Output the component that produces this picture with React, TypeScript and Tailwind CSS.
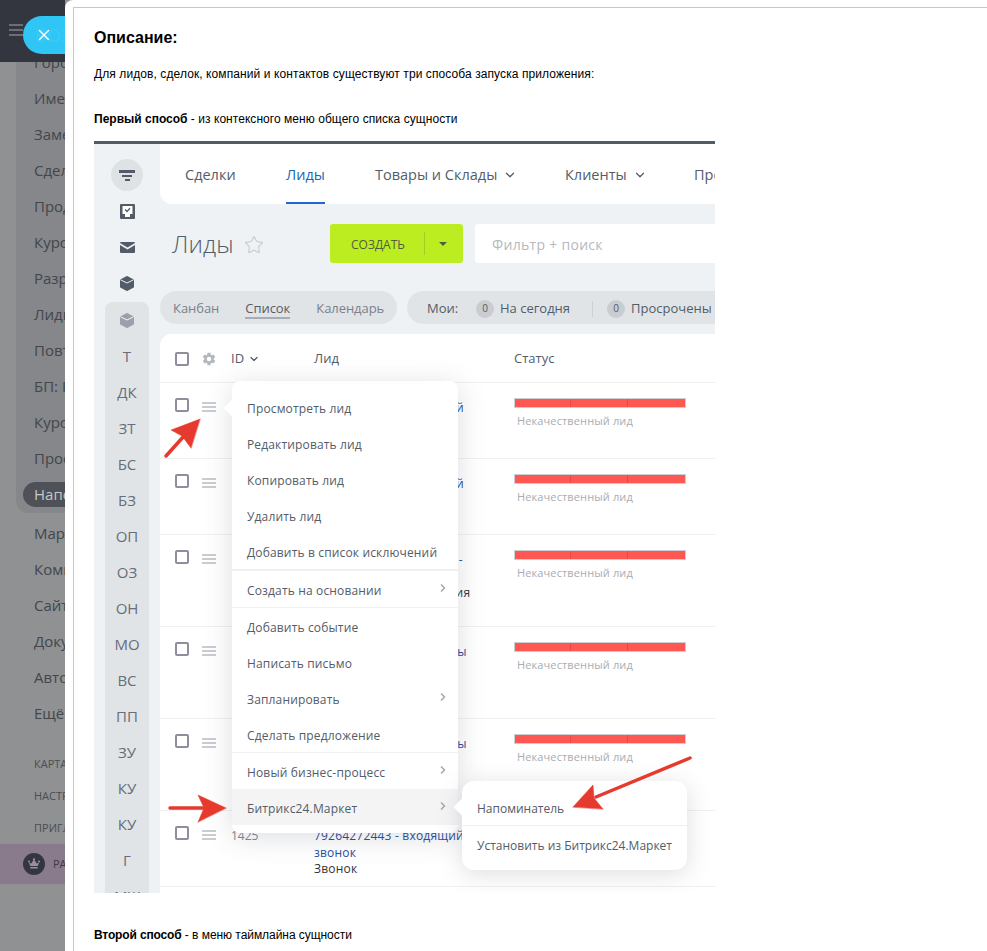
import { ChevronDown, ChevronRight, Star, X } from "lucide-react";
import { IoSettingsSharp } from "react-icons/io5";

const groupItems = ["Города", "Имена", "Замена", "Сделки", "Продажи", "Курсы", "Разработка", "Лиды", "Повторные", "БП: Работа", "Курсы", "Проекты"];
const sideItems = ["Маркет", "Компания", "Сайты", "Документы", "Автоматизация", "Ещё"];
const smallItems = ["Карта сайта", "Настройки", "Пригласить"];
const letters = ["Т", "ДК", "ЗТ", "БС", "БЗ", "ОП", "ОЗ", "ОН", "МО", "ВС", "ПП", "ЗУ", "КУ", "КУ", "Г", "МЖ"];

const rows = [
  { id: "1431", h: "h-[76px]", title: ["79264272443 - входящий", "звонок"], sub: "Звонок", status: true },
  { id: "1430", h: "h-[76px]", title: ["79264272443 - входящий", "звонок"], sub: "Звонок", status: true },
  { id: "1429", h: "h-[92px]", title: ["Заявка на звонок сайта -", "Новая заявка"], sub: "Заявка сайта: инвестиция", status: true },
  { id: "1428", h: "h-[92px]", title: ["Входящий заказ с формы", ""], sub: "Заказ", status: true },
  { id: "1427", h: "h-[92px]", title: ["Входящий заказ с формы", ""], sub: "Заказ", status: true },
  { id: "1425", h: "h-[76px]", title: ["79264272443 - входящий", "звонок"], sub: "Звонок", status: false },
];

const menuGroups = [
  { items: [["Просмотреть лид"], ["Редактировать лид"], ["Копировать лид"], ["Удалить лид"], ["Добавить в список исключений"]], divider: "border-b-2 border-[#eef0f1]" },
  { items: [["Создать на основании", ">"]], divider: "border-b border-[#eef0f1]" },
  { items: [["Добавить событие"], ["Написать письмо"], ["Запланировать", ">"], ["Сделать предложение"]], divider: "border-b border-[#eef0f1]" },
];

function Hamburger() {
  return (
    <div className="flex w-[14px] flex-col gap-[2px]">
      <div className="h-[2px] bg-[#c9ccd0]" />
      <div className="h-[2px] bg-[#c9ccd0]" />
      <div className="h-[2px] bg-[#c9ccd0]" />
    </div>
  );
}

function Checkbox() {
  return <div className="h-[14px] w-[14px] rounded-[2px] border-2 border-[#8e8e9e] bg-white" />;
}

function MenuItem({ label, more, active }: { label: string; more?: boolean; active?: boolean }) {
  return (
    <div className={`flex h-[36px] items-center justify-between pl-[15px] pr-[9px] pt-[4px] text-[12px] tracking-[0.15px] text-[#535c69] ${active ? "bg-[#f4f4f5]" : ""}`}>
      <span className="whitespace-nowrap">{label}</span>
      {more && <ChevronRight className="mb-[6px] h-[12px] w-[12px] text-[#a8adb4]" strokeWidth={3.5} />}
    </div>
  );
}

function StatusBar() {
  return (
    <div className="pt-[1px]">
      <div className="flex h-[10px] w-[172px] border border-[#ccd0d4] bg-[#ff5752]">
        <div className="w-[56px] border-r border-[#e04c4a]" />
        <div className="w-[57px] border-r border-[#e04c4a]" />
      </div>
      <div className="ml-[3px] mt-[5px] text-[11px] leading-[16px] tracking-[0.12px] text-[#a8adb4]">Некачественный лид</div>
    </div>
  );
}

function CubeIcon({ color }: { color: string }) {
  return (
    <svg width="14" height="15" viewBox="0 0 14 15">
      <path d="M6.3.3a1.5 1.5 0 0 1 1.4 0l5.6 2.9a1 1 0 0 1 .7 1v6.6a1 1 0 0 1-.7 1l-5.6 2.9a1.5 1.5 0 0 1-1.4 0L.7 11.8a1 1 0 0 1-.7-1V4.2a1 1 0 0 1 .7-1z" fill={color} />
      <path d="M.5 3.8L7 7l6.5-3.2" fill="none" stroke="#fff" strokeWidth="0.9" />
    </svg>
  );
}

export default function App() {
  return (
    <div className="relative flex h-[951px] w-[987px] overflow-hidden bg-[#8f9193] font-['Open_Sans',sans-serif]">
      {/* dimmed portal sidebar */}
      <div className="w-[65px] shrink-0 overflow-hidden">
        <div className="relative z-10 flex h-[62px] items-center bg-[#33363f] pb-[2px] pl-[9px]">
          <div className="flex w-[14px] flex-col gap-[3px]">
            <div className="h-[2px] bg-[#6b6e75]" />
            <div className="h-[2px] bg-[#6b6e75]" />
            <div className="h-[2px] bg-[#6b6e75]" />
          </div>
        </div>
        <div className="-mt-[18px] ml-[16px] w-[120px] rounded-bl-xl bg-[#85878a] pb-[1px] pl-[18px] text-[15px] text-[#43464c]">
          {groupItems.map((item, i) => (
            <div key={i} className="flex h-[36px] items-center whitespace-nowrap">{item}</div>
          ))}
          <div className="-ml-[11px] flex h-[36px] items-center">
            <div className="flex h-[25px] w-full items-center rounded-full bg-[#4e5158] pl-[11px] text-[#c6c7c9]">Напоминатель</div>
          </div>
        </div>
        <div className="mt-[2px] w-[200px] pl-[34px] text-[15px] text-[#43464c]">
          {sideItems.map((item) => (
            <div key={item} className="flex h-[36px] items-center whitespace-nowrap">{item}</div>
          ))}
        </div>
        <div className="mt-[17px] w-[200px] pl-[34px] text-[11px] uppercase text-[#4b4d52]">
          {smallItems.map((item) => (
            <div key={item} className="flex h-[32px] items-center whitespace-nowrap">{item}</div>
          ))}
        </div>
        <div className="flex h-[40px] w-[200px] items-center bg-[#897a8c] pl-[23px] text-[11px] uppercase text-[#3a3c42]">
          <div className="flex h-[22px] w-[22px] items-center justify-center rounded-full bg-[#33363f]">
            <svg width="14" height="12" viewBox="0 0 14 12">
              <path d="M1 3.5a1 1 0 1 1 .9 1L3.2 8h7.6l1.3-3.5a1 1 0 1 1 .9-1 1 1 0 0 1-.6.9L9.7 5.6 7.5 2a1 1 0 1 0-1 0L4.3 5.6 1.6 4.4A1 1 0 0 1 1 3.5zM3.3 9h7.4v1.5H3.3z" fill="#9a8ea0" />
            </svg>
          </div>
          <span className="ml-[8px] whitespace-nowrap">Расширить</span>
        </div>
      </div>

      {/* slider content */}
      <div className="relative z-20 flex-1 rounded-tl-lg bg-white pl-[8px] pt-[7px]">
        <div className="h-full border-l border-t border-[#c6c6c6] pl-[20px] font-['Liberation_Sans',sans-serif] text-black">
          <h1 className="mt-[20px] text-[16px] font-bold leading-[20px]">Описание:</h1>
          <p className="mt-[18px] text-[12px] leading-[16px] tracking-[0.09px]">Для лидов, сделок, компаний и контактов существуют три способа запуска приложения:</p>
          <p className="mt-[29px] text-[12px] leading-[16px]"><b>Первый способ</b> <span className="tracking-[0.05px]">- из контексного меню общего списка сущности</span></p>

          {/* first screenshot */}
          <div className="relative mt-[14px] flex h-[752px] w-[621px] overflow-hidden border-t-[3px] border-[#525c69] bg-[#eef2f4] font-['Open_Sans',sans-serif]">
            <div className="flex w-[66px] shrink-0 flex-col items-center pt-[15px]">
              <div className="flex h-[32px] w-[32px] shrink-0 flex-col items-center justify-center gap-[2px] rounded-full bg-[#dfe2e5]">
                <div className="h-[3px] w-[16px] bg-[#525c69]" />
                <div className="h-[2px] w-[10px] bg-[#525c69]" />
                <div className="h-[2px] w-[5px] bg-[#525c69]" />
              </div>
              <div className="mt-[2px] flex h-[36px] shrink-0 items-center">
                <svg width="15" height="15" viewBox="0 0 15 15">
                  <path d="M1 0h13a1 1 0 0 1 1 1v13a1 1 0 0 1-1 1H1a1 1 0 0 1-1-1V1a1 1 0 0 1 1-1z" fill="#525c69" />
                  <path d="M2.5 2h10v8H10v3H5v-3H2.5z" fill="#fff" />
                  <path d="M5 5.5l2 2 3-3.2" fill="none" stroke="#525c69" strokeWidth="1.3" />
                </svg>
              </div>
              <div className="flex h-[36px] shrink-0 items-center">
                <svg width="15" height="11" viewBox="0 0 15 11">
                  <path d="M0 1a1 1 0 0 1 1-1h13a1 1 0 0 1 1 1L7.5 5.5zM0 3l7.5 4.5L15 3v7a1 1 0 0 1-1 1H1a1 1 0 0 1-1-1z" fill="#525c69" />
                </svg>
              </div>
              <div className="flex h-[36px] shrink-0 items-center">
                <CubeIcon color="#525c69" />
              </div>
              <div className="mt-px flex w-[44px] shrink-0 flex-col items-center rounded-t-lg bg-[#e1e4e7] text-[15px] text-[#656e7a]">
                <div className="flex h-[36px] shrink-0 items-center">
                  <CubeIcon color="#9aa1ab" />
                </div>
                {letters.map((letter, i) => (
                  <div key={i} className="flex h-[36px] shrink-0 items-center">{letter}</div>
                ))}
              </div>
            </div>

            <div className="flex w-[555px] shrink-0 flex-col">
              <div className="flex h-[60px] shrink-0 items-center overflow-hidden rounded-bl-xl bg-white pl-[25px] text-[14.5px] text-[#535c69]">
                <span className="w-[101px] shrink-0 pt-[2px]">Сделки</span>
                <span className="relative flex h-full w-[89px] shrink-0 items-center pt-[2px] text-[#2067b0]">
                  Лиды
                  <span className="absolute bottom-0 left-0 h-[2px] w-[39px] bg-[#1f67d0]" />
                </span>
                <span className="flex w-[190px] shrink-0 items-center gap-[6px] pt-[2px]">Товары и Склады <ChevronDown className="h-[14px] w-[14px]" strokeWidth={2.2} /></span>
                <span className="flex w-[129px] shrink-0 items-center gap-[6px] pt-[2px]">Клиенты <ChevronDown className="h-[14px] w-[14px]" strokeWidth={2.2} /></span>
                <span className="shrink-0 pt-[2px]">Продажи</span>
              </div>

              <div className="mt-[20px] flex h-[39px] shrink-0">
                <div className="flex w-[170px] items-center pl-[12px]">
                  <span className="text-[24px] font-light leading-none tracking-[0.1px] text-[#535c69]">Лиды</span>
                  <Star className="ml-[10px] mt-[2px] h-[20px] w-[20px] text-[#c6cace]" strokeWidth={1.3} />
                </div>
                <div className="flex w-[133px] items-center rounded-[3px] bg-[#bbed21] pl-[21px] pt-[3px] text-[12px] text-[#535c41]">
                  <span className="w-[73px]">СОЗДАТЬ</span>
                  <div className="-mt-[3px] h-[23px] w-px bg-[#a3cf1e]" />
                  <div className="-mt-[3px] ml-[14px] h-0 w-0 border-x-[4px] border-t-[4px] border-x-transparent border-t-[#535c41]" />
                </div>
                <div className="ml-[12px] flex flex-1 items-center rounded-l-[3px] bg-white pl-[17px] pt-[1px] text-[14px] tracking-[0.3px] text-[#b4b9bf]">Фильтр + поиск</div>
              </div>

              <div className="mt-[28px] flex h-[33px] shrink-0 gap-[10px] text-[13px] text-[#7a818b]">
                <div className="flex w-[237px] items-center gap-[26px] rounded-full bg-[#e1e4e7] pl-[13px] pt-[2px] tracking-[-0.05px]">
                  <span>Канбан</span>
                  <span className="border-b-2 border-[#a8adb4] leading-[18px] text-[#535c69]">Список</span>
                  <span>Календарь</span>
                </div>
                <div className="flex flex-1 items-center rounded-l-full bg-[#e1e4e7] pl-[20px] pt-[2px] text-[#535c69]">
                  <span className="w-[49px]">Мои:</span>
                  <span className="flex h-[18px] w-[18px] items-center justify-center rounded-full bg-[#c9ccd0] text-[10px]">0</span>
                  <span className="ml-[6px] w-[92px] whitespace-nowrap">На сегодня</span>
                  <div className="h-[16px] w-px bg-[#cdd0d4]" />
                  <span className="ml-[14px] flex h-[18px] w-[18px] items-center justify-center rounded-full bg-[#c9ccd0] text-[10px]">0</span>
                  <span className="ml-[6px] whitespace-nowrap">Просрочены</span>
                </div>
              </div>

              <div className="mt-[10px] flex-1 rounded-tl-xl bg-white text-[12px]">
                <div className="flex h-[49px] items-center border-b border-[#eef0f1] pl-[15px] pt-[2px] text-[#535c69]">
                  <Checkbox />
                  <IoSettingsSharp className="ml-[13px] h-[14px] w-[14px] text-[#b4b8bd]" />
                  <span className="ml-[15px] flex w-[83px] items-center gap-[4px] text-[13px]">ID <ChevronDown className="h-[12px] w-[12px]" strokeWidth={2.5} /></span>
                  <span className="w-[200px] text-[13px]">Лид</span>
                  <span className="text-[13px]">Статус</span>
                </div>
                {rows.map((row) => (
                  <div key={row.id} className={`flex ${row.h} border-b border-[#eef0f1] pl-[15px] pt-[14px]`}>
                    <div className="pt-[1px]"><Checkbox /></div>
                    <div className="ml-[13px] pt-[5px]"><Hamburger /></div>
                    <div className="ml-[15px] w-[83px] pt-[2px] text-[#80868e]">{row.id}</div>
                    <div className="w-[200px] whitespace-nowrap pt-[2px] leading-[17px] tracking-[0.2px]">
                      <div className="text-[#1f4e9f]">{row.title[0]}</div>
                      <div className="h-[17px] text-[#1f4e9f]">{row.title[1]}</div>
                      <div className="-mt-px text-[#333]">{row.sub}</div>
                    </div>
                    {row.status && <StatusBar />}
                  </div>
                ))}
              </div>
            </div>

            {/* context menu */}
            <div className="absolute left-[138px] top-[237px] z-10 w-[226px] rounded-lg bg-white pb-[8px] pt-[8px] shadow-[0_4px_28px_rgba(83,92,105,0.2)]">
              <div className="absolute -left-[6px] top-[21px] h-[12px] w-[12px] rotate-45 bg-white" />
              {menuGroups.map((group, i) => (
                <div key={i} className={group.divider}>
                  {group.items.map(([label, more]) => (
                    <MenuItem key={label} label={label} more={!!more} />
                  ))}
                </div>
              ))}
              <MenuItem label="Новый бизнес-процесс" more />
              <MenuItem label="Битрикс24.Маркет" more active />
            </div>

            {/* submenu */}
            <div className="absolute left-[368px] top-[637px] z-20 w-[225px] rounded-xl bg-white text-[12px] leading-[18px] text-[#535c69] shadow-[0_4px_24px_rgba(83,92,105,0.2)]">
              <div className="absolute -left-[6px] top-[20px] h-[12px] w-[12px] rotate-45 bg-white" />
              <div className="relative border-b border-[#eef0f1] pb-[7px] pl-[15px] pt-[19px]">Напоминатель</div>
              <div className="relative whitespace-nowrap pb-[15px] pl-[15px] pt-[11px]">Установить из Битрикс24.Маркет</div>
            </div>
          </div>

          <p className="mt-[34px] text-[12px] leading-[16px]"><b className="tracking-[-0.15px]">Второй способ</b> <span className="tracking-[-0.05px]">- в меню таймлайна сущности</span></p>
        </div>
      </div>

      {/* close button of the slider */}
      <div className="absolute left-[23px] top-[16px] z-30 flex h-[38px] w-[42px] items-center justify-center overflow-hidden rounded-l-full bg-[#2fc6f6] pr-[1px]">
        <span className="absolute left-[12px] top-[7px] whitespace-nowrap text-[18px] leading-[24px] text-[#38cbf8]">ВОЗ</span>
        <X className="relative h-[18px] w-[18px] text-white" strokeWidth={2} />
      </div>

      {/* red annotation arrows */}
      <svg className="pointer-events-none absolute left-0 top-0 z-40" width="987" height="951" viewBox="0 0 987 951">
        <g fill="#e63a2e" stroke="#e63a2e" strokeLinecap="round">
          <path d="M166 456L184 436" strokeWidth="3.5" />
          <path d="M200 419L171 430L182 436L191 448Z" strokeWidth="0.5" />
          <path d="M170 808L206 808" strokeWidth="3.5" />
          <path d="M226 808L198 795L204 808L198 822Z" strokeWidth="0.5" />
          <path d="M690 758L596 797" strokeWidth="3.5" />
          <path d="M573 807L593 785L594 798L603 809Z" strokeWidth="0.5" />
        </g>
      </svg>
    </div>
  );
}
